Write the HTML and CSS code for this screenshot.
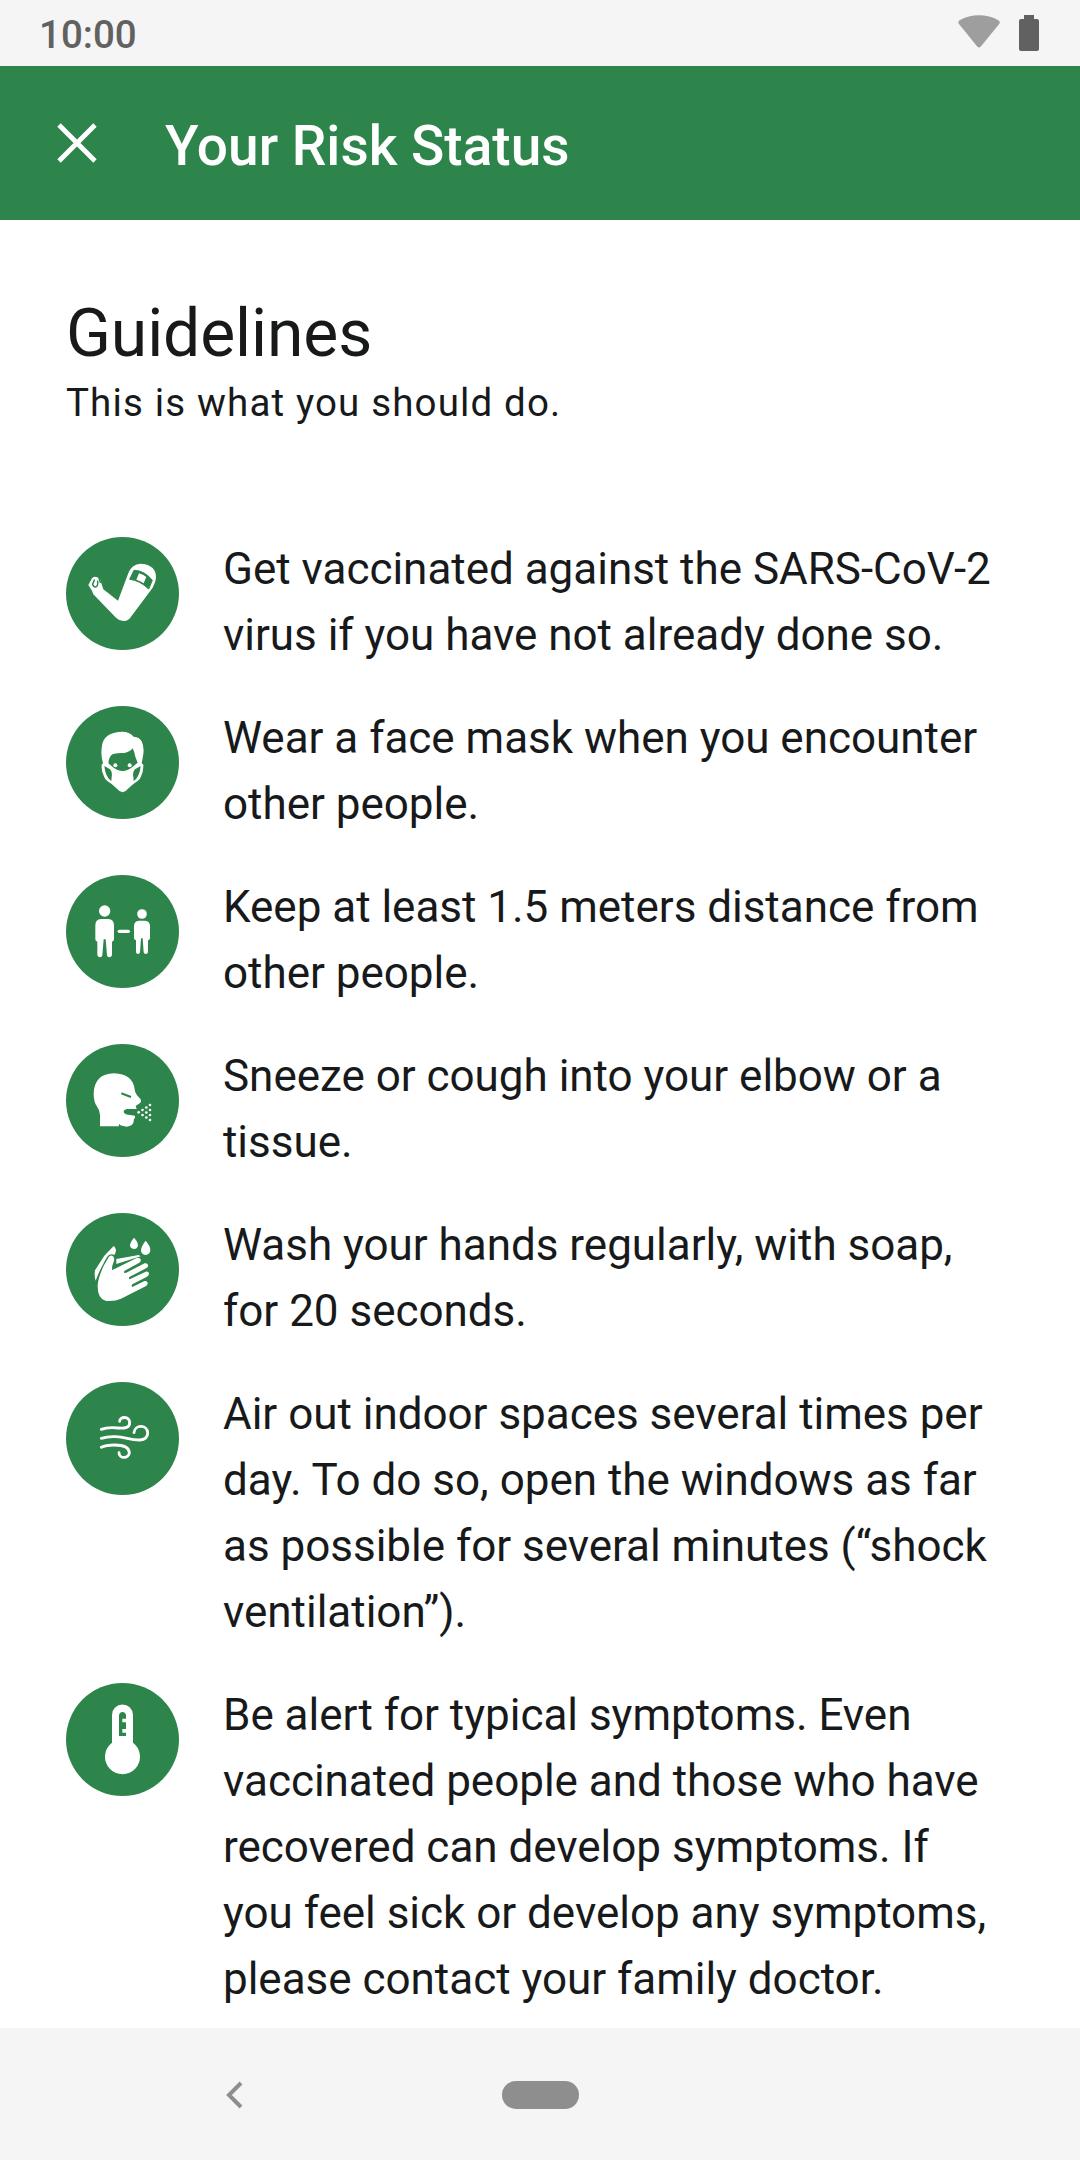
FILE: index.html
```html
<!DOCTYPE html>
<html lang="en">
<head>
<meta charset="utf-8">
<title>Your Risk Status</title>
<link rel="stylesheet" href="styles.css">
</head>
<body>
<div class="screen">
  <div class="status-bar">
    <span class="time">10:00</span>
    <div class="status-icons">
      <svg width="42" height="33" viewBox="0 0 42 33"><path d="M1.2 9.2C-.1 8 .1 6.300 1.600 5.200C13-1.400 29-1.400 40.400 5.200C42 6.300 42.200 8 41 9.200L22.800 31.500Q21 33.500 19.200 31.500Z" fill="#9e9e9e"/></svg>
      <svg width="20" height="36" viewBox="0 0 20 36"><path d="M5 0H15V4H18Q20 4 20 6V34Q20 36 18 36H2Q0 36 0 34V6Q0 4 2 4H5Z" fill="#616161"/></svg>
    </div>
  </div>
  <header class="app-bar">
    <svg class="close" width="40" height="40" viewBox="0 0 40 40"><path d="M2 2L38 38M38 2L2 38" stroke="#fff" stroke-width="4.800" fill="none"/></svg>
    <h1 class="title">Your Risk Status</h1>
  </header>
  <main class="content">
    <h2 class="heading">Guidelines</h2>
    <p class="subtitle">This is what you should do.</p>
    <ul class="guidelines">
      <li class="item">
        <svg class="icon" viewBox="18 21 339 339">
          <path fill="#fff" d="M85 165L96 145Q101 139 108 141Q116 142 121 149L124 160L130 178L174 212L204 132Q214 102 243 101Q270 101 283 121Q292 138 285 157L278 173L213 260Q206 272 192 273Q180 274 168 263L100 193L96 182Z"/>
          <path fill="none" stroke="#2e854b" stroke-width="4.500" stroke-linecap="round" d="M103 150L98 163Q100 171 107 171Q114 169 113 154M117 144L121 157"/>
          <path fill="#2e854b" stroke="#2e854b" stroke-width="3" stroke-linejoin="round" d="M222 121Q253 121 277 151L266 177Q239 151 209 148Z"/>
          <path fill="#fff" d="M237 130Q250 134 259 141L251 160Q241 153 229 149Z"/>
        </svg>
        <p class="text">Get vaccinated against the SARS-CoV-2<br>virus if you have not already done so.</p>
      </li>
      <li class="item">
        <svg class="icon" viewBox="18 18 339 339">
          <path fill="#fff" d="M129 190Q122 166 125 145Q126 119 145 106Q162 95 187 95Q208 95 221 110Q238 111 245 124Q254 142 249 168L245 190L250 194Q251 214 242 232Q236 244 221 251L204 266Q196 276 188 277Q179 276 171 266L154 251Q139 244 133 232Q123 213 125 194Z"/>
          <path fill="#2e854b" d="M145 190Q147 168 159 162Q176 158 193 159Q209 156 218 145Q223 154 226 170L233 188L217 201Q188 225 158 201Z"/>
          <path fill="#2e854b" d="M133 198L150 208Q158 217 155 231L154 243Q136 231 133 198ZM242 198L225 208Q217 217 220 231L221 243Q239 231 242 198Z"/>
          <circle cx="166" cy="196" r="6" fill="#fff"/><circle cx="209" cy="196" r="6" fill="#fff"/>
        </svg>
        <p class="text">Wear a face mask when you encounter<br>other people.</p>
      </li>
      <li class="item">
        <svg class="icon" viewBox="18 21 339 339">
          <g fill="#fff">
            <circle cx="134" cy="129" r="17"/>
            <path d="M123 153H145Q162 154 162 172V214Q162 220 156 221V262Q154 268 148 268Q142 268 141 262L137 214H131L127 262Q126 268 120 268Q114 268 112 262V221Q106 220 106 214V172Q106 154 123 153Z"/>
            <circle cx="246" cy="138" r="14.500"/>
            <path d="M237 158H255Q270 159 270 174V210Q270 216 264 217V253Q263 258 257 258Q252 258 251 253L248 211H243L240 253Q239 258 234 258Q229 258 228 253V217Q222 216 222 210V174Q222 159 237 158Z"/>
            <rect x="173" y="185" width="37" height="10" rx="5"/>
          </g>
        </svg>
        <p class="text">Keep at least 1.5 meters distance from<br>other people.</p>
      </li>
      <li class="item">
        <svg class="icon" viewBox="18 18 339 339">
          <path fill="#fff" d="M120 265V230Q119 216 110 204Q101 190 101 167Q103 107 162 106Q218 108 224 154Q224 164 231 172L242 184Q245 189 241 194L227 204L230 213H203Q192 214 191 221Q193 229 205 230L225 233V239Q220 244 221 250Q220 265 200 266Q189 265 181 262L178 257L176 265Z"/>
          <path d="M187 167L210 176" stroke="#2e854b" stroke-width="6.500" stroke-linecap="square"/>
          <g fill="#fff"><circle cx="236" cy="223" r="4"/><circle cx="247.500" cy="216" r="4"/><circle cx="247.500" cy="231" r="4"/><circle cx="259" cy="208.500" r="4"/><circle cx="259" cy="223.500" r="4"/><circle cx="259" cy="238.500" r="4"/><circle cx="270" cy="201" r="4"/><circle cx="270" cy="216" r="4"/><circle cx="270" cy="231" r="4"/><circle cx="270" cy="246" r="4"/></g>
        </svg>
        <p class="text">Sneeze or cough into your elbow or a<br>tissue.</p>
      </li>
      <li class="item">
        <svg class="icon" viewBox="18 18 339 339">
          <g fill="#fff">
            <path d="M107 221Q102 207 105 190L133 146L161 117Q167 121 168 130Q167 138 163 144Q154 139 146 145Q141 149 130 170Q116 196 107 221Z"/>
            <path d="M169 171V156L236 144L242 148Z"/>
            <path d="M113 235Q114 212 132 175L145 152Q151 142 159 148Q165 153 161 165Q155 178 156 189L168 184L230 153Q239 150 242 157Q244 163 238 167L194 191Q190 195 193 198L199 197L254 169Q262 167 264 174Q266 180 258 184L208 210Q205 214 209 217L257 194Q265 192 267 199Q268 205 261 209L217 232Q213 236 217 240L252 223Q260 220 263 227Q264 234 257 238L183 275Q165 284 138 282Q112 277 113 235Z"/>
            <path d="M222 92Q234 105 234 115Q233 126 222 126Q210 125 210 114Q211 105 222 92ZM257 101Q271 117 271 129Q270 143 257 144Q243 143 243 129Q244 117 257 101Z"/>
          </g>
        </svg>
        <p class="text">Wash your hands regularly, with soap,<br>for 20 seconds.</p>
      </li>
      <li class="item">
        <svg class="icon" viewBox="18 18 339 339">
          <g fill="none" stroke="#fff" stroke-width="8.500" stroke-linecap="round">
            <path d="M124 160Q142 153 174 156C196 158 209 154 209 140C209 120 179 120 179 136"/>
            <path d="M124 187Q142 181 167 182C195 183 213 193 239 192C255 191 263 183 263 171C262 145 224 145 222 170"/>
            <path d="M124 214Q136 207 164 207C190 207 207 215 208 230C207 249 177 249 177 230"/>
          </g>
        </svg>
        <p class="text">Air out indoor spaces several times per<br>day. To do so, open the windows as far<br>as possible for several minutes (“shock<br>ventilation”).</p>
      </li>
      <li class="item">
        <svg class="icon" viewBox="18 18 339 339">
          <path fill="#fff" d="M156 197V114A31.500 31.500 0 0 1 219 114V197A52.500 52.500 0 1 1 156 197Z"/>
          <path fill="#2e854b" d="M177 177V115Q179 105 188 105Q196 105 198 113V125H187V136H198V156H187V167H198V177Z"/>
        </svg>
        <p class="text">Be alert for typical symptoms. Even<br>vaccinated people and those who have<br>recovered can develop symptoms. If<br>you feel sick or develop any symptoms,<br>please contact your family doctor.</p>
      </li>
    </ul>
  </main>
  <nav class="nav-bar">
    <div class="nav-slot"><svg class="back" width="18" height="28" viewBox="0 0 18 28"><path d="M15 2L3 14L15 26" fill="none" stroke="#8e8e8e" stroke-width="4"/></svg></div>
    <div class="nav-slot"><span class="home"></span></div>
    <div class="nav-slot"></div>
  </nav>
</div>
</body>
</html>
```
FILE: styles.css
```css
* { box-sizing: border-box; margin: 0; padding: 0; }
body { background: #fff; font-family: Roboto, sans-serif; color: #17191a; }
svg { display: block; }
.screen { width: 1080px; height: 2160px; display: flex; flex-direction: column; overflow: hidden; }
.status-bar { height: 66px; flex: none; background: #f5f5f5; display: flex; justify-content: space-between; align-items: flex-start; padding: 0 41px 0 39px; }
.time { font-size: 38.5px; font-weight: 500; line-height: 45px; padding-top: 12px; color: #616161; }
.status-icons { display: flex; gap: 19px; padding-top: 15px; }
.app-bar { height: 154px; flex: none; background: #2e854b; display: flex; align-items: center; padding-left: 57px; gap: 68px; }
.title { font-size: 55px; font-weight: 500; line-height: 64px; color: #fff; padding-top: 6px; }
.content { flex: 1; min-height: 0; padding: 75px 66px 0; }
.heading { font-size: 66px; font-weight: 400; line-height: 77px; letter-spacing: -0.1px; }
.subtitle { font-size: 38.5px; line-height: 46px; letter-spacing: 1.150px; padding-top: 8px; }
.guidelines { list-style: none; display: flex; flex-direction: column; gap: 37px; padding-top: 111px; }
.item { display: flex; align-items: flex-start; gap: 44px; }
.icon { width: 113px; height: 113px; flex: none; border-radius: 50%; background: #2e854b; }
.text { font-size: 44px; line-height: 66px; margin: -1px 0 1px; letter-spacing: -0.02px; white-space: nowrap; }
.nav-bar { height: 132px; flex: none; background: #f5f5f5; display: flex; align-items: center; padding: 1px 83px 0; }
.nav-slot { flex: 1; display: flex; justify-content: center; }
.home { width: 77px; height: 28px; border-radius: 14px; background: #8e8e8e; }
```
